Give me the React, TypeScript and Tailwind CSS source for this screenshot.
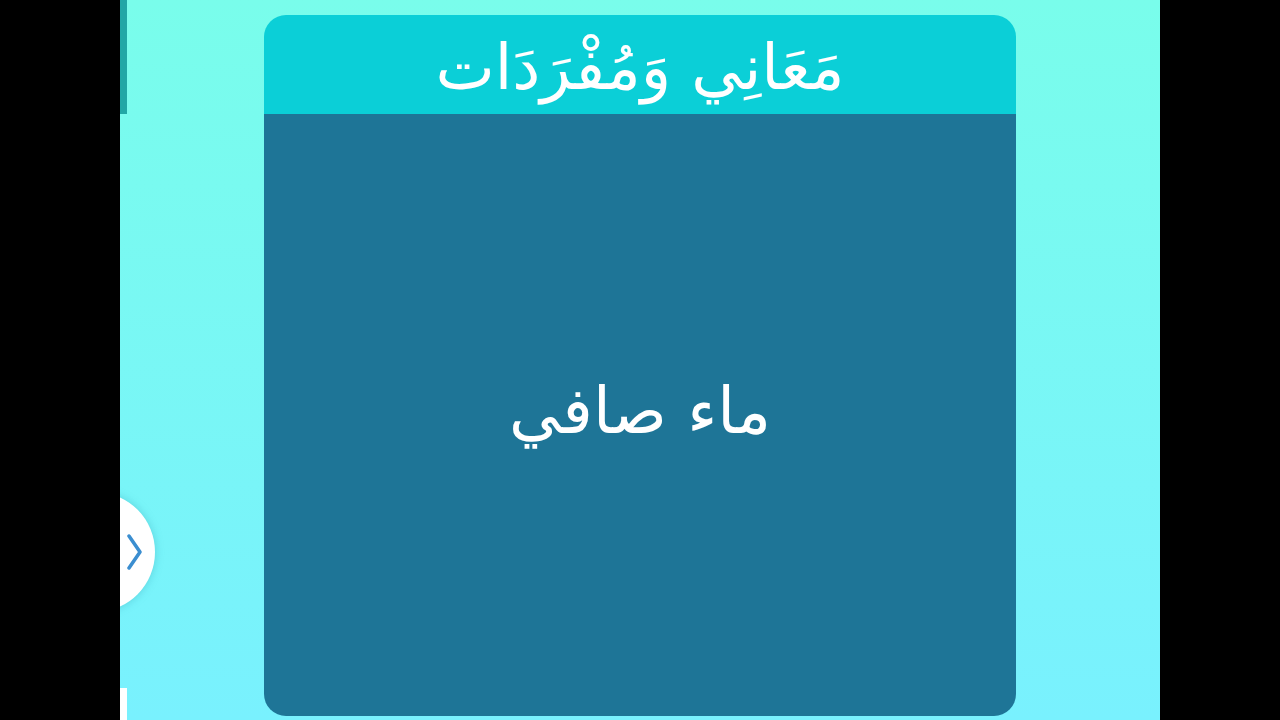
const App = () => {
  return (
    <div className="flex h-[720px] w-[1280px] bg-black overflow-hidden">
      <div className="w-[120px] shrink-0 bg-black" />

      <div className="relative flex w-[1040px] overflow-hidden bg-gradient-to-b from-[#79fdeb] to-[#79f1fe]">
        {/* edge of the previous page */}
        <div className="flex w-[7px] shrink-0 flex-col">
          <div className="h-[114px] bg-[#22a7a6]" />
          <div className="flex-1" />
          <div className="h-[32px] bg-white" />
        </div>

        <div className="flex flex-1 flex-col pl-[137px] pr-[144px] pt-[15px] pb-[4px]">
          <div className="flex flex-1 flex-col overflow-hidden rounded-[22px]">
            <div className="flex h-[99px] shrink-0 items-center justify-center bg-[#0bcfd7]">
              <h1
                dir="rtl"
                className="mt-[6px] text-[63px] leading-none text-white"
                style={{ fontFamily: '"DejaVu Sans", sans-serif' }}
              >
                مَعَانِي وَمُفْرَدَات
              </h1>
            </div>
            <div className="flex flex-1 items-center justify-center bg-[#1e7597]">
              <p
                dir="rtl"
                className="mb-[8px] text-[64px] leading-none text-white"
                style={{ fontFamily: '"DejaVu Sans", sans-serif' }}
              >
                ماء صافي
              </p>
            </div>
          </div>
        </div>

        {/* next button peeking in from the left */}
        <div className="absolute left-[-25px] top-[492px] flex h-[120px] w-[60px] items-center justify-end rounded-r-full bg-white shadow-[0_0_8px_rgba(40,150,170,0.35)]">
          <svg viewBox="0 0 16 36" className="mr-[13px] h-[36px] w-[16px]" fill="none">
            <polyline
              points="3,2 14,18 3,34"
              stroke="#3b8ed0"
              strokeWidth="3.5"
              strokeLinecap="round"
              strokeLinejoin="round"
            />
          </svg>
        </div>
      </div>

      <div className="w-[120px] shrink-0 bg-black" />
    </div>
  );
};

export default App;
